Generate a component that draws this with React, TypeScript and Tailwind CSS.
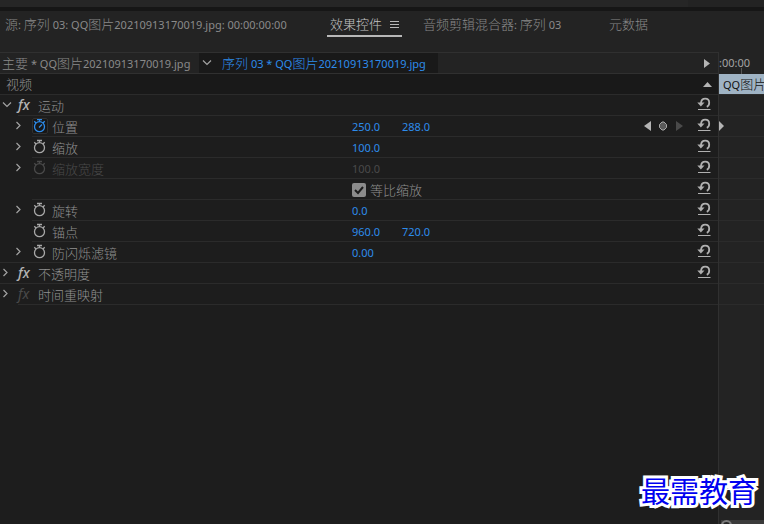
import type { ReactNode } from 'react';

const CJK = /([\u4e00-\u9fff]+)/;

interface MixedProps {
  text: string;
}

// Latin runs stay at 11px, Chinese runs are set at 13px
function Mixed({ text }: MixedProps) {
  return (
    <span className="whitespace-pre text-[11px]">
      {text.split(CJK).map((part, i) =>
        CJK.test(part) ? (
          <span key={i} className="text-[13px] font-light">{part}</span>
        ) : (
          part
        ),
      )}
    </span>
  );
}

function Chevron({ down = false }: { down?: boolean }) {
  return (
    <svg width="10" height="10" viewBox="0 0 10 10" fill="none" stroke="#a3a3a3" strokeWidth="1.2">
      <path d={down ? 'M1 2.500l4 4 4-4' : 'M3.500 1l3.500 3.500L3.500 8'} />
    </svg>
  );
}

function Stopwatch({ state }: { state: 'on' | 'off' | 'disabled' }) {
  const color = state === 'on' ? '#2d8ceb' : state === 'off' ? '#a8a8a8' : '#4a4a4a';
  return (
    <svg width="16" height="16" viewBox="0 0 16 16" fill="none" stroke={color} strokeWidth="1.3">
      <circle cx="7.5" cy="8.7" r="5" />
      <path d="M5 1.500h5M7.500 1.500v2.300M2.300 3.300l1.700 1.700M12.700 3.300L11 5" />
      {state === 'on' && <path d="M7 9.500l3-3" />}
    </svg>
  );
}

function ResetIcon() {
  return (
    <svg width="14" height="14" viewBox="0 0 14 14" fill="none" stroke="#b0b0b0">
      <path d="M4 6C4.200 3 5.800 1.600 8.200 1.600c2.600 0 4 1.900 4 4.200 0 1.900-.7 3.300-2.400 4" strokeWidth="1.8" />
      <path d="M.3 5.600h7.200L3.900 9.600z" fill="#b0b0b0" stroke="none" />
      <path d="M1 12.500h12.500" strokeWidth="1" />
    </svg>
  );
}

interface Property {
  label?: string;
  values?: string[];
  level: 0 | 1;
  expand?: 'open' | 'closed';
  watch?: 'on' | 'off' | 'disabled';
  disabled?: boolean;
  check?: string;
  keys?: boolean;
  reset?: boolean;
}

const PROPERTIES: Property[] = [
  { label: '运动', level: 0, expand: 'open', reset: true },
  { label: '位置', level: 1, expand: 'closed', watch: 'on', values: ['250.0', '288.0'], keys: true, reset: true },
  { label: '缩放', level: 1, expand: 'closed', watch: 'off', values: ['100.0'], reset: true },
  { label: '缩放宽度', level: 1, expand: 'closed', watch: 'disabled', values: ['100.0'], disabled: true, reset: true },
  { level: 1, check: '等比缩放', reset: true },
  { label: '旋转', level: 1, expand: 'closed', watch: 'off', values: ['0.0'], reset: true },
  { label: '锚点', level: 1, watch: 'off', values: ['960.0', '720.0'], reset: true },
  { label: '防闪烁滤镜', level: 1, expand: 'closed', watch: 'off', values: ['0.00'], reset: true },
  { label: '不透明度', level: 0, expand: 'closed', reset: true },
  { label: '时间重映射', level: 0, expand: 'closed', disabled: true },
];

function KeyframeNav() {
  return (
    <div className="mr-[14px] flex items-center gap-2">
      <button type="button" aria-label="上一关键帧">
        <svg width="7" height="10" viewBox="0 0 7 10" fill="#b4b4b4"><path d="M7 0v10L0 5z" /></svg>
      </button>
      <button type="button" aria-label="添加关键帧">
        <svg width="8" height="10" viewBox="0 0 8 10" fill="#5a5a5a" stroke="#a8a8a8">
          <path d="M3 1h2L7.500 3.500v3L5 9H3L.5 6.500v-3z" />
        </svg>
      </button>
      <button type="button" aria-label="下一关键帧" className="ml-px">
        <svg width="7" height="10" viewBox="0 0 7 10" fill="#4a4a4a"><path d="M0 0v10l7-5z" /></svg>
      </button>
    </div>
  );
}

interface PropertyRowProps {
  row: Property;
  fullLine: boolean;
}

function PropertyRow({ row, fullLine }: PropertyRowProps) {
  const nested = row.level === 1;
  return (
    <div className="flex h-[21px]">
      <div
        className={`flex shrink-0 items-center border-b ${fullLine ? 'border-[#2b2b2b]' : 'border-transparent'} ${
          nested ? 'w-8 pl-[13px]' : row.expand === 'open' ? 'w-[18px] pl-[2px]' : 'w-[18px]'
        }`}
      >
        {row.expand && (
          <button type="button" aria-label={`展开 ${row.label}`}>
            <Chevron down={row.expand === 'open'} />
          </button>
        )}
      </div>
      <div className="flex min-w-0 flex-1 items-center border-b border-[#2b2b2b]">
        <div className={nested ? 'flex w-[320px] shrink-0 items-center gap-1' : 'flex w-[334px] shrink-0 items-center'}>
          {row.watch && (
            <button
              type="button"
              aria-label={`切换动画 ${row.label}`}
              className={row.watch === 'on' ? 'rounded-xs bg-[#171717] outline -outline-offset-1 outline-[#303030]' : ''}
            >
              <Stopwatch state={row.watch} />
            </button>
          )}
          {!nested && (
            <span className={row.disabled ? 'w-5 text-[14px] italic text-[#4a4a4a]' : 'w-5 text-[14px] font-medium italic text-[#b4b4b4]'}>
              fx
            </span>
          )}
          {row.label && (
            <span className={row.disabled && nested ? 'pt-px text-[#4a4a4a]' : 'pt-px text-[#919191]'}>
              <Mixed text={row.label} />
            </span>
          )}
        </div>
        {row.values?.map(value => (
          <span key={value} className={row.disabled ? 'w-[50px] pt-0.5 text-[11px] text-[#4a4a4a]' : 'w-[50px] pt-0.5 text-[11px] text-[#2d8ceb]'}>
            {value}
          </span>
        ))}
        {row.check && (
          <label className="flex items-center gap-1 pt-0.5 text-[#919191]">
            <span className="grid">
              <input
                type="checkbox"
                defaultChecked
                className="col-start-1 row-start-1 size-3.5 appearance-none rounded-xs bg-[#8c8c8c]"
              />
              <svg className="pointer-events-none col-start-1 row-start-1" width="14" height="14" viewBox="0 0 14 14" fill="none" stroke="#1d1d1d" strokeWidth="2">
                <path d="M3 7l3 3 5-6" />
              </svg>
            </span>
            <Mixed text={row.check} />
          </label>
        )}
        <div className="ml-auto flex items-center pr-[7px]">
          {row.keys && <KeyframeNav />}
          {row.reset && (
            <button type="button" aria-label="重置参数" className="pb-[3px]">
              <ResetIcon />
            </button>
          )}
        </div>
      </div>
    </div>
  );
}

function Tab({ active = false, children }: { active?: boolean; children: ReactNode }) {
  return (
    <button
      type="button"
      className={
        active
          ? 'flex h-[26px] items-center gap-2 border-b-2 border-[#b8b8b8] px-[3px] pt-0.5 text-[#c4c4c4]'
          : 'flex h-[26px] items-center border-b-2 border-transparent pt-0.5 text-[#8a8a8a]'
      }
    >
      {children}
    </button>
  );
}

function Timeline() {
  return (
    <div className="flex w-[46px] shrink-0 flex-col overflow-hidden border-l border-[#303030] bg-[#232323]">
      <div className="relative flex h-[22px] shrink-0 items-center text-[11px] text-[#a3a3a3]">
        :00:00
        <span className="absolute bottom-0 left-[22px] h-[6px] w-px bg-[#555]" />
      </div>
      <div className="flex h-[21px] shrink-0 items-center border-b border-[#2b2b2b] bg-[#9fb3c4] bg-clip-padding pl-1 text-[#111]">
        <Mixed text="QQ图片" />
      </div>
      {PROPERTIES.map((row, i) => (
        <div key={i} className="flex h-[21px] shrink-0 items-center border-b border-[#2b2b2b]">
          {row.keys && (
            <svg width="6" height="10" viewBox="0 0 6 10" fill="#b4b4b4"><path d="M0 0v10l5-5z" /></svg>
          )}
        </div>
      ))}
      <div className="mt-auto ml-[2px] flex h-[4px] items-start overflow-hidden bg-[#3a3a3a]">
        <span className="size-[11px] shrink-0 rounded-full border-2 border-[#7a7a7a] bg-[#232323]" />
      </div>
    </div>
  );
}

export default function App() {
  return (
    <div className="relative flex min-h-screen flex-col overflow-hidden bg-[#1d1d1d] font-['Noto_Sans','Noto_Sans_CJK_SC',sans-serif] leading-4">
      <div className="h-[7px] bg-[#232323]">
        <div className="h-full w-9/10 bg-[#262626]" />
      </div>
      <div className="h-1 bg-[#161616]" />
      <nav className="flex h-[41px] shrink-0 items-start whitespace-nowrap bg-[#232323] pl-[5px]">
        <div className="flex w-[322px] shrink-0">
          <Tab><Mixed text="源: 序列 03: QQ图片20210913170019.jpg: 00:00:00:00" /></Tab>
        </div>
        <div className="flex w-24 shrink-0">
          <Tab active>
            <Mixed text="效果控件" />
            <svg width="9" height="9" viewBox="0 0 9 9" stroke="#b8b8b8"><path d="M0 1.500h9M0 4.500h9M0 7.500h9" /></svg>
          </Tab>
        </div>
        <div className="flex w-[186px] shrink-0">
          <Tab><Mixed text="音频剪辑混合器: 序列 03" /></Tab>
        </div>
        <Tab><Mixed text="元数据" /></Tab>
      </nav>

      <div className="flex flex-1">
        <main className="min-w-0 flex-1">
          <div className="flex h-[22px] items-stretch border-y border-[#303030] bg-[#232323]">
            <div className="flex w-[199px] items-center pl-[2px] text-[#8a8a8a]">
              <Mixed text="主要 * QQ图片20210913170019.jpg" />
            </div>
            <div className="flex w-[239px] items-center gap-[10px] bg-[#191919] pl-[3px] text-[#2d8ceb]">
              <Chevron down />
              <Mixed text="序列 03 * QQ图片20210913170019.jpg" />
            </div>
            <button type="button" aria-label="显示时间轴" className="ml-auto pr-2">
              <svg width="6" height="9" viewBox="0 0 6 9" fill="#b4b4b4"><path d="M0 0v9l6-4.500z" /></svg>
            </button>
          </div>
          <div className="flex h-[21px] items-center justify-between border-b border-[#2b2b2b] bg-[#191919] pl-[6px] pr-[6px] text-[#919191]">
            <Mixed text="视频" />
            <button type="button" aria-label="折叠视频">
              <svg width="9" height="5" viewBox="0 0 9 5" fill="#b4b4b4"><path d="M0 5h9L4.500 0z" /></svg>
            </button>
          </div>
          {PROPERTIES.map((row, i) => (
            <PropertyRow key={i} row={row} fullLine={PROPERTIES[i + 1]?.level === 0} />
          ))}
        </main>
        <Timeline />
      </div>

      <div className="absolute bottom-[14px] right-[7px] text-[29px] leading-9 text-[#0000f0] [-webkit-text-stroke:6px_white] [paint-order:stroke_fill]">
        最需教育
      </div>
    </div>
  );
}
